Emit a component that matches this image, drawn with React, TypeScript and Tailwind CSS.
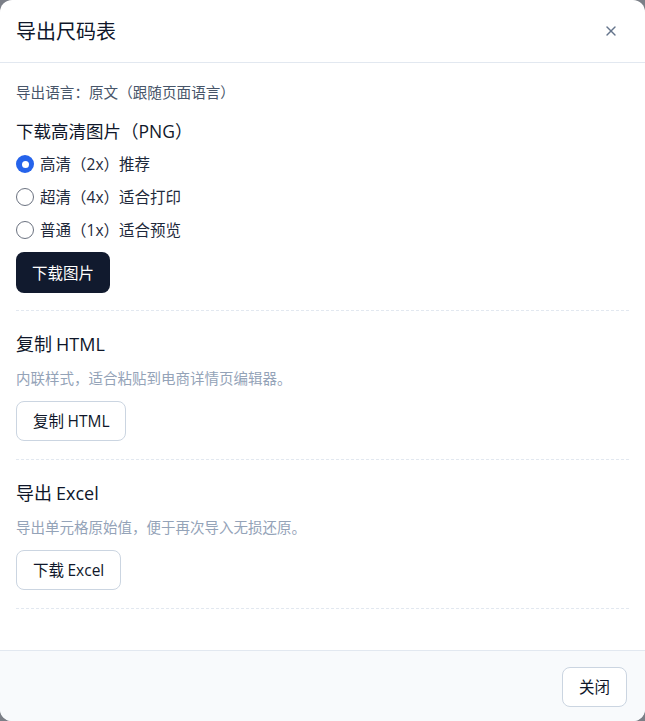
import { X } from "lucide-react";

const QUALITY = [
  { id: "2x", pre: "高清（", post: "）推荐" },
  { id: "4x", pre: "超清（", post: "）适合打印" },
  { id: "1x", pre: "普通（", post: "）适合预览" },
];

function Latin({ children }: { children: string }) {
  return <span className="font-['Open_Sans']">{children}</span>;
}

function Radio({ checked }: { checked: boolean }) {
  return checked ? (
    <span className="flex h-[18px] w-[18px] shrink-0 items-center justify-center rounded-full bg-[#2563eb]">
      <span className="h-[7px] w-[7px] rounded-full bg-white" />
    </span>
  ) : (
    <span className="h-[18px] w-[18px] shrink-0 rounded-full border border-[#6b7280] bg-white" />
  );
}

export default function App() {
  return (
    <div className="h-[721px] w-[645px] overflow-hidden bg-[#7b7f87] font-['Noto_Sans_CJK_SC',sans-serif]">
      <div className="flex h-full flex-col overflow-hidden rounded-xl bg-white text-[#0f172a]">
        <div className="flex h-[63px] shrink-0 items-center justify-between border-b border-[#e2e8f0] pl-4 pr-[26px]">
          <h1 className="text-[20px] leading-none">导出尺码表</h1>
          <X className="h-4 w-4 text-[#64748b]" strokeWidth={2} />
        </div>

        <div className="flex-1 px-4 pt-[19px]">
          <p className="text-[14.6px] leading-5 text-[#475569]">导出语言：原文（跟随页面语言）</p>

          <section className="border-b border-dashed border-[#e2e8f0] pb-[17px]">
            <h2 className="mt-[17px] text-[17.5px] leading-[24px]">
              下载高清图片（<Latin>PNG</Latin>）
            </h2>
            <div className="mt-[10px] flex flex-col gap-[11px]">
              {QUALITY.map((q, i) => (
                <label key={q.id} className="flex h-[22px] items-center gap-[6px] text-[15.5px]">
                  <Radio checked={i === 0} />
                  <span className="text-[#1e293b]">
                    {q.pre}
                    <Latin>{q.id}</Latin>
                    {q.post}
                  </span>
                </label>
              ))}
            </div>
            <button className="mt-[11px] h-[41px] rounded-lg bg-[#111a2e] px-4 text-[15.5px] text-white">
              下载图片
            </button>
          </section>

          <section className="border-b border-dashed border-[#e2e8f0] pb-[18px]">
            <h2 className="mt-[20px] text-[18px] leading-[24px]">
              复制 <Latin>HTML</Latin>
            </h2>
            <p className="mt-[12px] text-[14.5px] leading-5 text-[#94a3b8]">内联样式，适合粘贴到电商详情页编辑器。</p>
            <button className="mt-[13px] h-10 rounded-lg border border-[#cbd5e1] bg-white px-4 text-[15.5px] text-[#0f172a]">
              复制 <Latin>HTML</Latin>
            </button>
          </section>

          <section className="border-b border-dashed border-[#e2e8f0] pb-[18px]">
            <h2 className="mt-[20px] text-[18px] leading-[24px]">
              导出 <Latin>Excel</Latin>
            </h2>
            <p className="mt-[12px] text-[14.5px] leading-5 text-[#94a3b8]">导出单元格原始值，便于再次导入无损还原。</p>
            <button className="mt-[13px] h-10 rounded-lg border border-[#cbd5e1] bg-white px-4 text-[15.5px] text-[#0f172a]">
              下载 <Latin>Excel</Latin>
            </button>
          </section>
        </div>

        <div className="flex h-[71px] shrink-0 items-start justify-end border-t border-[#e2e8f0] bg-[#f8fafc] px-[18px] pt-4">
          <button className="h-10 rounded-lg border border-[#cbd5e1] bg-white px-4 text-[15.5px]">关闭</button>
        </div>
      </div>
    </div>
  );
}
